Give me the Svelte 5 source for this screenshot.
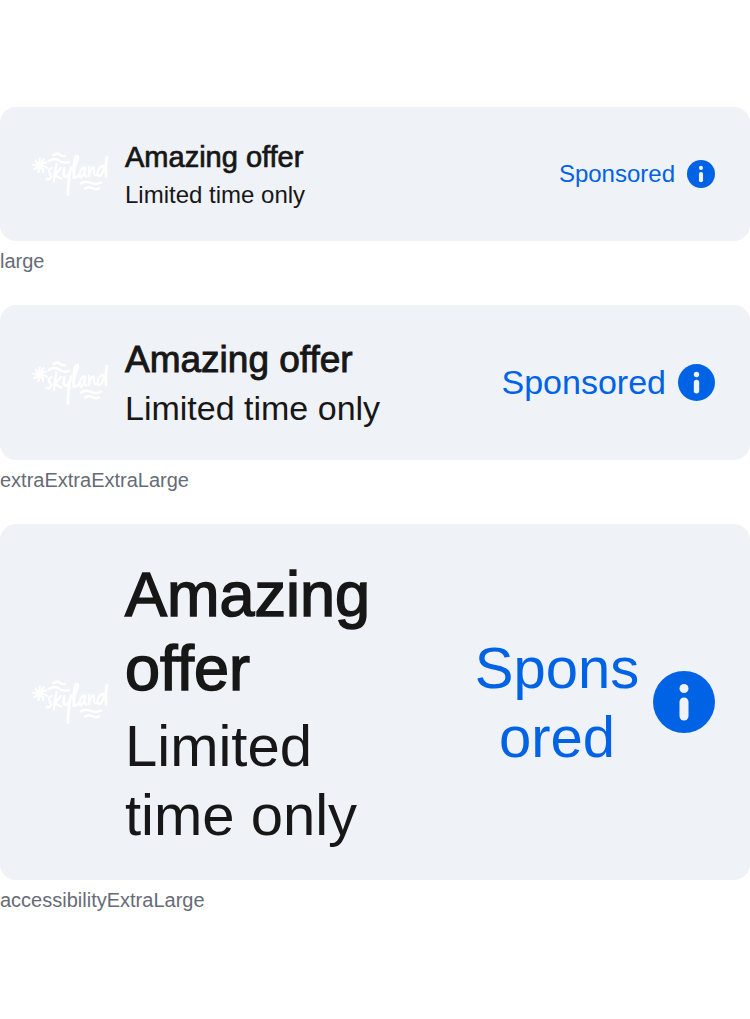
<script>
  const cards = [
    { size: 'large', caption: 'large' },
    { size: 'xxxl', caption: 'extraExtraExtraLarge' },
    { size: 'ax', caption: 'accessibilityExtraLarge' }
  ];
</script>

<main>
  {#each cards as card}
    <section class={card.size}>
      <div class="card">
        <svg class="logo" viewBox="0 0 78 46" aria-hidden="true">
          <circle cx="7.7" cy="14.5" r="3.4" fill="#fff" />
          <g fill="none" stroke="#fff" stroke-linecap="round" stroke-linejoin="round">
            <path stroke-width="1.9" d="M8 14.500Q6 11 8 7.500M8 14.500Q4 13 4 9.500M8 14.500Q4 15.500 1 13.500M8 14.500Q5.500 18 2 18M8 14.500Q8.500 18.500 6 21.500M8 14.500Q11.500 17 11 21M8 14.500Q12 14 15 17M8 14.500Q10.500 11 14.500 11.500M8 14.500Q8.500 10.500 12 8" />
            <g stroke-width="2.3">
              <path d="M19.500 17Q15.500 19 17.500 22Q20.500 25.500 18 27.500Q16.500 29 14.500 28" />
              <path d="M24.500 12.500Q22.500 21 22 30M29 17Q26.500 20 23 23.500Q26 26.500 29.500 27.500" />
              <path d="M41.500 27Q42 16 45 10Q47 5 45 5Q42 5 41.500 18Q41 27 43.500 26.500Q46 26 48 22M53 16.500Q49.500 16.500 48 21.500Q46.500 26.500 49 26.500Q51.500 25.500 53.500 16.500Q52 25 54.500 25.500M57 16L57 25Q58.500 17.500 61 16.500Q62.500 16 62 21Q62 25 65 24M71.500 15Q67.500 15 66 20Q65 25.500 67.500 25Q70 24.500 72.500 16" />
            </g>
            <path stroke-width="2.8" d="M32.500 17.500Q30.500 25 33.500 25.500Q37 26 39 16.500Q37 24 36.500 32Q36 38 36 43.500M75 6Q73 15 74 25" />
            <path stroke-width="2.5" d="M21.500 4Q25 1.500 27.500 3.500Q30 6 33 5M17 10Q22 6.500 26 9Q31.500 13 37 11M49 32.500Q53 29.500 58 31.500Q64 34.500 69 31.500M53 37.500Q56.500 35.500 60 37Q64 39 67 37.500" />
          </g>
        </svg>
        <div class="copy"><h2>Amazing offer</h2><p>Limited time only</p></div>
        <button type="button">
          <span>Sponsored</span>
          <svg class="info" viewBox="0 0 62 62" aria-hidden="true"><circle cx="31" cy="31" r="31" fill="#0063e6" /><circle cx="31" cy="17.5" r="4.5" fill="#eff2f7" /><rect x="26.5" y="26.5" width="9" height="23" rx="4.5" fill="#eff2f7" /></svg>
        </button>
      </div>
      <p class="caption">{card.caption}</p>
    </section>
  {/each}
</main>

<style>
  :global(body) { margin: 0; background: #fff; }
  main { display: grid; gap: 32px; padding: 107px 0; font-family: "Liberation Sans", Arial, sans-serif; }
  section { --title: 29px; --title-line: 34px; --text: 24px; --text-line: 30px; --icon: 28px; }
  .xxxl { --title: 37px; --title-line: 44px; --text: 34px; --text-line: 41px; --icon: 37px; }
  .ax { --title: 63px; --title-line: 74px; --text: 58px; --text-line: 69px; --icon: 62px; }
  h2, p { margin: 0; }
  .card { display: flex; align-items: center; padding: 31px 35px 31px 32px; border-radius: 16px; background: #eff2f7; color: #171717; }
  .logo { width: 78px; height: 46px; flex: none; margin-right: 15px; }
  .copy { flex: 1; min-width: 0; display: grid; gap: 6px; padding-top: 2px; }
  h2 { font-weight: 400; font-size: var(--title); line-height: var(--title-line); -webkit-text-stroke: 0.025em currentColor; }
  .copy p { font-size: var(--text); line-height: var(--text-line); }
  button { display: flex; align-items: center; gap: 12px; padding: 0; border: 0; background: none; font: inherit; color: #0063e6; font-size: var(--text); line-height: var(--text-line); }
  .ax .copy { padding-right: 48px; }
  .ax button { flex: 0 1 38%; min-width: 0; justify-content: flex-end; }
  .ax span { width: 168px; overflow-wrap: anywhere; }
  .info { width: var(--icon); height: var(--icon); flex: none; }
  .caption { margin-top: 8px; font-size: 20px; line-height: 24px; color: #676b76; }
</style>
